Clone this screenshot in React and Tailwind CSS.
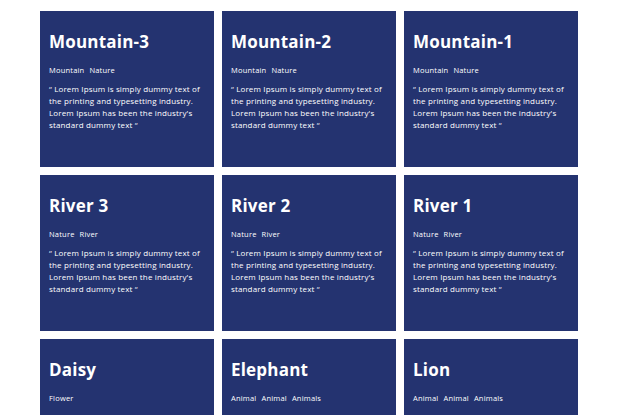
const lines = [
  "“ Lorem Ipsum is simply dummy text of",
  "the printing and typesetting industry.",
  "Lorem Ipsum has been the industry's",
  "standard dummy text “",
];

const cards = [
  { title: "Mountain-3", tags: ["Mountain", "Nature"] },
  { title: "Mountain-2", tags: ["Mountain", "Nature"] },
  { title: "Mountain-1", tags: ["Mountain", "Nature"] },
  { title: "River 3", tags: ["Nature", "River"] },
  { title: "River 2", tags: ["Nature", "River"] },
  { title: "River 1", tags: ["Nature", "River"] },
  { title: "Daisy", tags: ["Flower"] },
  { title: "Elephant", tags: ["Animal", "Animal", "Animals"] },
  { title: "Lion", tags: ["Animal", "Animal", "Animals"] },
];

const App = () => {
  return (
    <div
      className="h-screen overflow-hidden bg-white pl-[40px] pt-[11px]"
      style={{ fontFamily: "'Open Sans', 'DejaVu Sans', sans-serif" }}
    >
      <div className="grid grid-cols-[174px_174px_174px] gap-[8px]">
        {cards.map((card, i) => (
          <div key={i} className="bg-[#243370] h-[156px] px-[9px] pt-[20px] text-white">
            <h2 className="text-[17px] font-bold leading-[22px] tracking-[0.2px]">{card.title}</h2>
            <div className="mt-[12px] flex gap-[5px] text-[7.5px] leading-[10px] tracking-[0.2px]">
              {card.tags.map((t, j) => (
                <span key={j}>{t}</span>
              ))}
            </div>
            <p className="mt-[8px] text-[8px] leading-[12px] tracking-[0.15px] whitespace-nowrap">
              {lines.map((l, j) => (
                <span key={j} className="block">{l}</span>
              ))}
            </p>
          </div>
        ))}
      </div>
    </div>
  );
};

export default App;
